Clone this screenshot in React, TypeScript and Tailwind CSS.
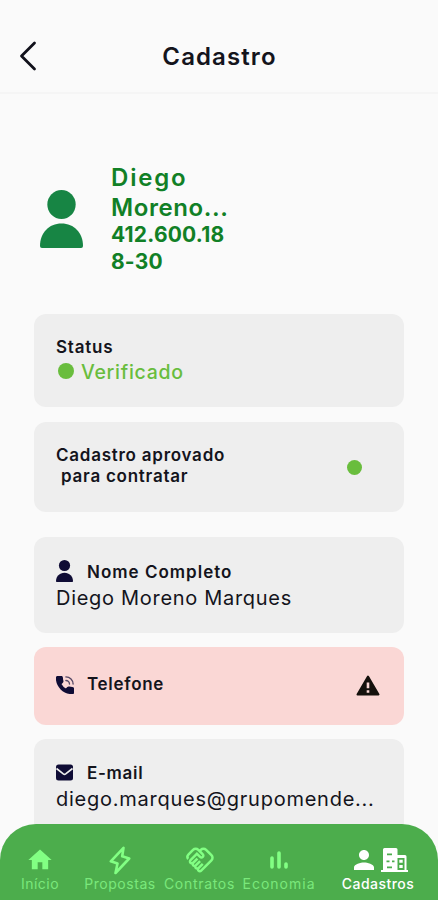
import type { ReactNode } from 'react'
import { MdHome, MdOutlineHandshake, MdPerson } from 'react-icons/md'

function PersonIcon({ className }: { className?: string }) {
  return (
    <svg viewBox="0 0 44 58" preserveAspectRatio="none" fill="currentColor" className={className}>
      <circle cx="22" cy="14.5" r="14.5" />
      <path d="M0 56C0 43 9 33.5 22 33.5S44 43 44 56q0 2-2 2H2q-2 0-2-2Z" />
    </svg>
  )
}

function PhoneIcon() {
  return (
    <svg viewBox="2 2 20 20" className="size-[18px] text-[#0f0c35]">
      <path
        d="M6.620 10.790c1.440 2.830 3.760 5.140 6.590 6.590l2.200-2.200c.27-.27.67-.36 1.020-.24 1.120.37 2.330.57 3.570.57.55 0 1 .45 1 1V20c0 .55-.45 1-1 1-9.390 0-17-7.610-17-17 0-.55.45-1 1-1h3.500c.55 0 1 .45 1 1 0 1.250.2 2.450.57 3.570.11.35.03.74-.25 1.020l-2.200 2.200z"
        fill="currentColor"
        stroke="currentColor"
        strokeWidth="2.400"
        strokeLinejoin="round"
      />
      <path
        d="M13 3c4.500 0 8 3.500 8 8M13 7c2.200 0 4 1.800 4 4"
        fill="none"
        stroke="currentColor"
        strokeWidth="1.500"
        strokeLinecap="round"
        opacity="0.7"
      />
    </svg>
  )
}

function WarningIcon() {
  return (
    <svg viewBox="0 0 24 21" className="mr-[2px] ml-auto h-[21px] w-6 text-[#15110d]">
      <path
        d="M12 1.500 22.500 19.500H1.500Z"
        fill="currentColor"
        stroke="currentColor"
        strokeWidth="2"
        strokeLinejoin="round"
      />
      <path d="M10.700 7.500h2.600v5.800h-2.600zM10.700 15.300h2.600v2.500h-2.600z" fill="#fad7d5" />
    </svg>
  )
}

function MailIcon() {
  return (
    <svg viewBox="0 0 17 17" className="-mt-0.5 h-[17px] w-[17px]">
      <rect y="0.5" width="17" height="16" rx="2.5" fill="#0f0c35" />
      <path d="M.5 4.500 7.300 9.900q1.200.9 2.400 0L16.500 4.500" fill="none" stroke="#eeeeee" strokeWidth="1.600" />
    </svg>
  )
}

function BoltIcon() {
  return (
    <svg
      viewBox="0 0 22 29"
      fill="none"
      stroke="currentColor"
      strokeWidth="2.6"
      strokeLinejoin="round"
      className="h-[29px] w-[22px]"
    >
      <path d="M14.500 1.800 1.800 15.300l6.700 2.200-2 9.500L20.200 12.500 13.200 10.300Z" />
    </svg>
  )
}

function BarsIcon() {
  return (
    <svg
      viewBox="0 0 18 18"
      stroke="currentColor"
      strokeWidth="3.6"
      strokeLinecap="round"
      className="-ml-px h-[18px] w-[18px]"
    >
      <path d="M2 7v9M9 2v14M16 13v3" />
    </svg>
  )
}

function BuildingsIcon() {
  return (
    <svg viewBox="0 0 27 24" className="ml-[2px] h-6 w-[27px]">
      <path d="M2 1.500Q2 0 3.500 0H15q1.500 0 1.500 1.500V7H24q1.500 0 1.500 1.500V22H27v2H0v-2h2Z" fill="currentColor" />
      <g fill="#4cad4c">
        <path d="M6 5.500h5v1.800H6zM5.500 12.500h3v1.800h-3zM11 12.500h2.500v1.800H11zM6 18.500h5v1.800H6z" />
        <path d="M16.500 10h7v12h-7z" />
      </g>
      <path d="M18.300 11.800h3.400v3h-3.400zM18.300 17h3.400v3h-3.400z" fill="currentColor" />
    </svg>
  )
}

function Card({ className, children }: { className: string; children: ReactNode }) {
  return <section className={`shrink-0 rounded-xl px-[22px] ${className}`}>{children}</section>
}

function Tab({
  label,
  labelClass,
  className,
  children,
}: {
  label: string
  labelClass: string
  className: string
  children: ReactNode
}) {
  return (
    <button type="button" className={`flex flex-col items-center ${className}`}>
      <span className="flex h-7 items-center justify-center">{children}</span>
      <span className={`text-[14px] leading-5 whitespace-nowrap ${labelClass}`}>{label}</span>
    </button>
  )
}

export default function App() {
  return (
    <div className="flex h-[900px] w-[438px] flex-col overflow-hidden bg-[#fafafa] font-['Inter',sans-serif] text-[#14141c]">
      <header className="grid h-[94px] shrink-0 grid-cols-[1fr_auto_1fr] items-center border-b-2 border-[#f5f5f5] px-[19px] pt-5">
        <button type="button" aria-label="Voltar">
          <svg
            viewBox="0 0 18 30"
            fill="none"
            stroke="#11111b"
            strokeWidth="2.8"
            strokeLinecap="round"
            strokeLinejoin="round"
            className="h-[30px] w-[18px]"
          >
            <path d="M15.500 2 2.500 15l13 13" />
          </svg>
        </button>
        <h1 className="pt-px pl-px text-[24px] font-semibold tracking-[1.1px]">Cadastro</h1>
      </header>

      <main className="flex min-h-0 flex-1 flex-col overflow-hidden px-[34px]">
        <div className="mt-[69px] flex h-[151px] shrink-0 pl-[6px]">
          <PersonIcon className="mt-[27px] h-[58px] w-[43px] text-[#178544]" />
          <div className="ml-7 font-semibold text-[#118026]">
            <p className="text-[24px] leading-[29.5px]">
              <span className="tracking-[1.8px]">Diego</span>
              <br />
              <span className="tracking-[0.6px]">Moreno...</span>
            </p>
            <p className="text-[21px] leading-[26.5px] font-bold tracking-[0.2px]">
              412.600.18
              <br />
              8-30
            </p>
          </div>
        </div>

        <Card className="h-[93px] bg-[#eeeeee] pt-[21px]">
          <h2 className="text-[17px] leading-6 font-semibold tracking-[0.8px]">Status</h2>
          <div className="flex items-center gap-[7px] text-[#69bd3d]">
            <span className="-mt-1 ml-[2px] size-4 rounded-full bg-[#69bd3d]" />
            <span className="text-[19.5px] leading-[27px] font-medium tracking-[0.7px]">Verificado</span>
          </div>
        </Card>

        <Card className="mt-[15px] flex h-[90px] items-center justify-between bg-[#eeeeee]">
          <h2 className="-mt-0.5 text-[17px] leading-[21px] font-semibold tracking-[0.75px] whitespace-pre">
            {'Cadastro aprovado\n para contratar'}
          </h2>
          <span className="mr-5 size-[15px] rounded-full bg-[#69bd3d]" />
        </Card>

        <Card className="mt-[25px] h-24 bg-[#eeeeee] pt-[22px]">
          <div className="flex items-center">
            <PersonIcon className="-mt-0.5 h-[22px] w-[17px] text-[#0f0c35]" />
            <h2 className="ml-[14px] text-[17px] leading-[26px] font-semibold tracking-[1px]">Nome Completo</h2>
          </div>
          <p className="text-[20px] leading-[27px] tracking-[0.7px]">Diego Moreno Marques</p>
        </Card>

        <Card className="mt-[14px] flex h-[78px] items-center bg-[#fad7d5] pb-[2px]">
          <PhoneIcon />
          <h2 className="ml-[13px] text-[17px] font-semibold tracking-[0.7px]">Telefone</h2>
          <WarningIcon />
        </Card>

        <Card className="mt-[14px] h-[110px] bg-[#eeeeee] pt-[21px]">
          <div className="flex items-center">
            <MailIcon />
            <h2 className="ml-[14px] text-[17px] leading-[26px] font-semibold tracking-[0.7px]">E-mail</h2>
          </div>
          <p className="text-[20px] leading-[27px] tracking-[0.75px] whitespace-nowrap">diego.marques@grupomende...</p>
        </Card>
      </main>

      <div className="h-[76px] shrink-0 bg-[linear-gradient(90deg,#fafafa_34px,#eeeeee_34px,#eeeeee_404px,#fafafa_404px)]">
        <nav className="flex h-full rounded-t-[36px] bg-[#4cad4c] pt-[22px] text-[#82ff83]">
          <Tab label="Início" labelClass="text-[#7ae87b] tracking-[0.5px]" className="w-20">
            <MdHome className="size-7" />
          </Tab>
          <Tab label="Propostas" labelClass="text-[#7ae87b] tracking-[0.55px]" className="w-20">
            <BoltIcon />
          </Tab>
          <Tab label="Contratos" labelClass="text-[#7ae87b] tracking-[0.7px]" className="w-[79px]">
            <MdOutlineHandshake className="size-[30px]" />
          </Tab>
          <Tab label="Economia" labelClass="text-[#7ae87b] tracking-[1px]" className="w-20">
            <BarsIcon />
          </Tab>
          <Tab label="Cadastros" labelClass="font-medium tracking-[0.45px]" className="w-[118px] text-white">
            <MdPerson className="size-[30px]" />
            <BuildingsIcon />
          </Tab>
        </nav>
      </div>
    </div>
  )
}
